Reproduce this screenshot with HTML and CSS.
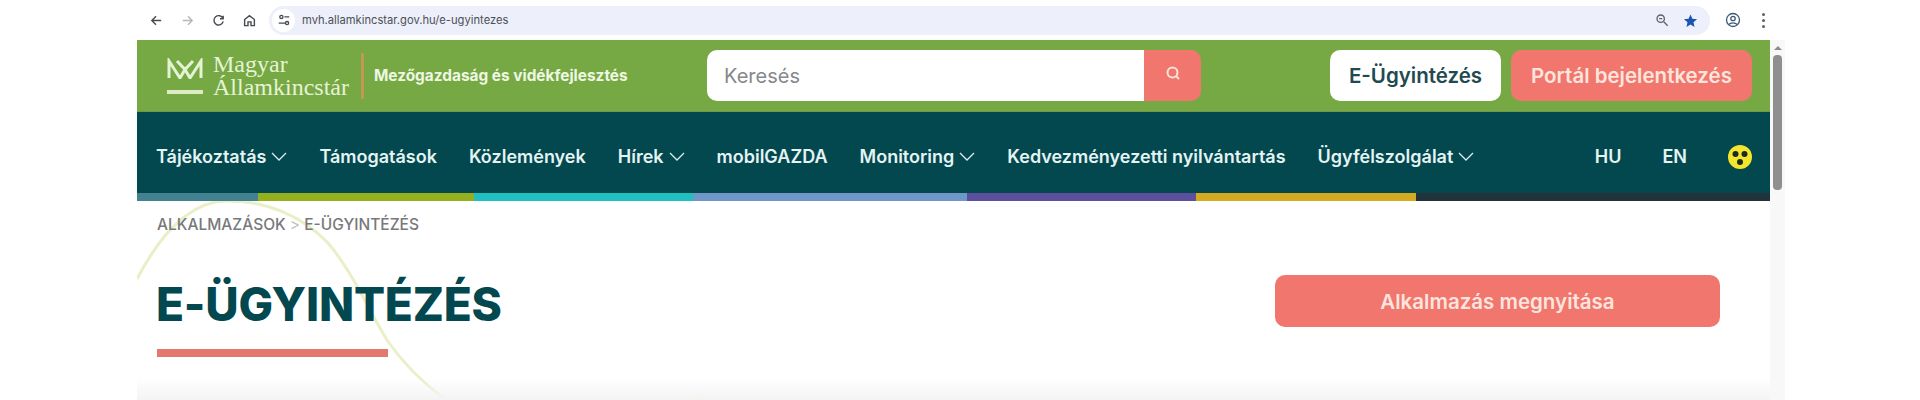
FILE: index.html
```html
<!DOCTYPE html>
<html lang="hu">
<head>
    <meta charset="UTF-8">
    <title>E-Ügyintézés</title>
    <link rel="stylesheet" href="styles.css">
</head>
<body>
    <div class="window">
        <!-- browser bar -->
        <div class="chrome">
            <svg class="chrome-icon" viewBox="0 0 16 16"><path d="M13 8H3.500M7.500 3.500 3 8l4.500 4.500"/></svg>
            <svg class="chrome-icon faded" viewBox="0 0 16 16"><path d="M3 8h9.500M8.500 3.500 13 8l-4.500 4.500"/></svg>
            <svg class="chrome-icon" viewBox="0 0 16 16"><path d="M12.800 6A5 5 0 1 0 13 9M13 2.800V6.200H9.600"/></svg>
            <svg class="chrome-icon" viewBox="0 0 16 16"><path d="M2.800 7 8 2.800 13.200 7v6.500H9.600V9.500H6.400v4H2.800z"/></svg>
            <div class="address">
                <span class="tune">
                    <svg viewBox="0 0 16 16"><circle cx="5" cy="4.500" r="1.800"/><path d="M8.500 4.500H14M2 11.500h7.500"/><circle cx="11.500" cy="11.500" r="1.800"/></svg>
                </span>
                <span class="url">mvh.allamkincstar.gov.hu/e-ugyintezes</span>
                <svg class="addr-zoom" viewBox="0 0 16 16"><circle cx="6.500" cy="6.500" r="4.200"/><path d="M10 10l4.500 4.500M4.800 6.500h3.400"/></svg>
                <svg class="addr-star" viewBox="0 0 16 16"><path d="M8 1.500l2 4.600 5 .5-3.800 3.300 1.100 4.900L8 12.300l-4.300 2.500 1.100-4.900L1 6.600l5-.5z"/></svg>
            </div>
            <svg class="profile" viewBox="0 0 16 16"><circle cx="8" cy="8" r="6.500"/><circle cx="8" cy="6.500" r="2.200"/><path d="M3.800 12.500c2-2.300 6.400-2.300 8.400 0"/></svg>
            <span class="dots"><i></i><i></i><i></i></span>
        </div>

        <div class="page">
            <div class="site">
                <svg class="curve" viewBox="0 0 1633 199">
                    <path d="M0 78C25 30 55-1 92 0c38 0 73 15 99 42 24 28 41 68 59 97 18 26 40 46 59 60"/>
                    <path d="M548 199q16-4 32 0"/>
                </svg>

                <header class="topbar">
                    <div class="brand">
                        <div class="brand-mark">
                            <svg viewBox="0 0 36 21"><path d="M2 20V3l11 17 5-8.500 5 8.500L34 3v17M10 3l8 8.500L26 3"/></svg>
                            <span class="brand-rule"></span>
                        </div>
                        <div class="brand-name">Magyar<br>Államkincstár</div>
                        <div class="brand-sub">Mezőgazdaság és vidékfejlesztés</div>
                    </div>
                    <div class="search">
                        <div class="search-input">Keresés</div>
                        <div class="search-btn">
                            <svg viewBox="0 0 16 16"><circle cx="7.500" cy="7.500" r="5"/><path d="M11 11l3 3"/></svg>
                        </div>
                    </div>
                    <div class="top-actions">
                        <a class="btn btn-white">E-Ügyintézés</a>
                        <a class="btn btn-red">Portál bejelentkezés</a>
                    </div>
                </header>

                <nav class="nav">
                    <a>Tájékoztatás <svg class="chev" viewBox="0 0 16 9"><path d="M1 1l7 7 7-7"/></svg></a>
                    <a>Támogatások</a>
                    <a>Közlemények</a>
                    <a>Hírek <svg class="chev" viewBox="0 0 16 9"><path d="M1 1l7 7 7-7"/></svg></a>
                    <a>mobilGAZDA</a>
                    <a>Monitoring <svg class="chev" viewBox="0 0 16 9"><path d="M1 1l7 7 7-7"/></svg></a>
                    <a>Kedvezményezetti nyilvántartás</a>
                    <a>Ügyfélszolgálat <svg class="chev" viewBox="0 0 16 9"><path d="M1 1l7 7 7-7"/></svg></a>
                    <div class="nav-right">
                        <a>HU</a>
                        <a>EN</a>
                        <svg class="blind" viewBox="0 0 24 24"><circle cx="12" cy="12" r="12" fill="#f3e62c"/><circle cx="7.500" cy="9" r="3" fill="#1d2a22"/><circle cx="16.500" cy="9" r="3" fill="#1d2a22"/><circle cx="12" cy="17" r="3" fill="#1d2a22"/></svg>
                    </div>
                </nav>

                <div class="stripes">
                    <span class="s1"></span><span class="s2"></span><span class="s3"></span><span class="s4"></span><span class="s5"></span><span class="s6"></span><span class="s7"></span>
                </div>

                <main class="content">
                    <div class="crumbs">ALKALMAZÁSOK <span class="crumb-sep">&gt;</span> E-ÜGYINTÉZÉS</div>
                    <div class="title-row">
                        <div>
                            <h1>E-ÜGYINTÉZÉS</h1>
                            <div class="title-bar"></div>
                        </div>
                        <a class="btn btn-red btn-open">Alkalmazás megnyitása</a>
                    </div>
                </main>
                <div class="fade"></div>
            </div>
            <div class="scrollbar">
                <span class="scroll-up"></span>
                <span class="scroll-thumb"></span>
            </div>
        </div>
    </div>
</body>
</html>
```

FILE: styles.css
```css
body {
    margin: 0;
    height: 400px;
    overflow: hidden;
    background: #fff;
    font-family: Inter, "Liberation Sans", sans-serif;
}
.window {
    width: 1648px;
    margin-left: 137px;
}

/* browser bar */
.chrome {
    height: 40px;
    display: flex;
    align-items: center;
    box-sizing: border-box;
    padding: 0 20px 0 12px;
    background: #fff;
}
.chrome-icon {
    width: 15px;
    height: 15px;
    margin-right: 16px;
    fill: none;
    stroke: #474b50;
    stroke-width: 1.500;
}
.chrome-icon.faded {
    stroke: #b4b7bb;
}
.address {
    flex: 1;
    height: 29px;
    margin-left: -4px;
    display: flex;
    align-items: center;
    border-radius: 15px;
    background: #edf0fa;
}
.tune {
    width: 23px;
    height: 23px;
    margin: 0 7px 0 3px;
    display: flex;
    align-items: center;
    justify-content: center;
    border-radius: 50%;
    background: #fff;
}
.tune svg {
    width: 14px;
    height: 14px;
    fill: none;
    stroke: #474b50;
    stroke-width: 1.500;
}
.url {
    flex: 1;
    font-size: 11.200px;
    color: #4b4f57;
}
.addr-zoom {
    width: 14px;
    height: 14px;
    margin-right: 14px;
    fill: none;
    stroke: #5d6165;
    stroke-width: 1.500;
}
.addr-star {
    width: 15px;
    height: 15px;
    margin-right: 12px;
    fill: #1a56b0;
}
.profile {
    width: 16px;
    height: 16px;
    margin-left: 15px;
    fill: none;
    stroke: #3c5a78;
    stroke-width: 1.300;
}
.dots {
    margin-left: 21px;
    display: flex;
    flex-direction: column;
    gap: 3px;
}
.dots i {
    width: 3px;
    height: 3px;
    border-radius: 50%;
    background: #5d6165;
}

.page {
    display: flex;
    height: 360px;
}
.site {
    position: relative;
    width: 1633px;
    overflow: hidden;
    background: #fff;
}
.scrollbar {
    flex: 1;
    background: #f8f8f8;
    display: flex;
    flex-direction: column;
    align-items: center;
}
.scroll-up {
    margin-top: 6px;
    border-left: 4px solid transparent;
    border-right: 4px solid transparent;
    border-bottom: 4px solid #8c8c8c;
}
.scroll-thumb {
    width: 9px;
    height: 135px;
    margin-top: 5px;
    border-radius: 4px;
    background: #8f8f8f;
}

/* green bar */
.topbar {
    height: 72px;
    display: flex;
    align-items: center;
    box-sizing: border-box;
    padding-left: 30px;
    background: #76a844;
    border-bottom: 1px solid #6d9a48;
}
.brand {
    width: 540px;
    display: flex;
    align-items: center;
}
.brand-mark {
    width: 36px;
    display: flex;
    flex-direction: column;
    gap: 11px;
}
.brand-mark svg {
    width: 36px;
    height: 21px;
    fill: none;
    stroke: #e4f3d2;
    stroke-width: 3;
}
.brand-rule {
    height: 4px;
    background: #dcebc4;
}
.brand-name {
    margin-left: 10px;
    padding-right: 12px;
    border-right: 3px solid #c09a50;
    font-family: "Liberation Serif", serif;
    font-size: 24px;
    line-height: 23px;
    color: #e6f3d6;
}
.brand-sub {
    margin-left: 10px;
    font-size: 15.400px;
    font-weight: 700;
    white-space: nowrap;
    color: #eef7e2;
}
.search {
    width: 494px;
    height: 51px;
    display: flex;
}
.search-input {
    flex: 1;
    display: flex;
    align-items: center;
    box-sizing: border-box;
    padding-left: 17px;
    border-radius: 10px 0 0 10px;
    background: #fff;
    font-size: 20px;
    color: #85888c;
}
.search-btn {
    width: 57px;
    display: flex;
    align-items: center;
    justify-content: center;
    padding-bottom: 6px;
    box-sizing: border-box;
    border-radius: 0 10px 10px 0;
    background: #f1766d;
}
.search-btn svg {
    width: 16px;
    height: 16px;
    fill: none;
    stroke: #fbe3da;
    stroke-width: 2;
}
.top-actions {
    margin-left: 129px;
    display: flex;
    gap: 10px;
}
.btn {
    height: 51px;
    display: flex;
    align-items: center;
    justify-content: center;
    border-radius: 10px;
    font-size: 20.500px;
    font-weight: 600;
}
.btn-white {
    width: 171px;
    background: #fff;
    color: #1f4a50;
}
.btn-red {
    width: 241px;
    background: #f1766d;
    color: #fde5dd;
}

/* dark nav */
.nav {
    height: 81px;
    display: flex;
    align-items: center;
    gap: 32px;
    box-sizing: border-box;
    padding: 8px 18px 0 19px;
    background: #03474f;
    font-size: 18px;
    font-weight: 600;
    white-space: nowrap;
    color: #e3f4f2;
}
.nav a {
    display: flex;
    align-items: center;
    gap: 5px;
}
.chev {
    width: 16px;
    height: 9px;
    fill: none;
    stroke: #d8eeee;
    stroke-width: 1.300;
}
.nav-right {
    margin-left: auto;
    display: flex;
    align-items: center;
    gap: 41px;
}
.blind {
    width: 24px;
    height: 24px;
}
.stripes {
    height: 8px;
    display: flex;
}
.stripes span {
    display: block;
}
.s1 { width: 121px; background: #42818f; }
.s2 { width: 216px; background: #95b01f; }
.s3 { width: 219px; background: #22bfc0; }
.s4 { width: 274px; background: #6f97c8; }
.s5 { width: 229px; background: #5b4f9e; }
.s6 { width: 220px; background: #d4aa20; }
.s7 { flex: 1; background: #20323a; }

.content {
    position: relative;
    padding: 14px 50px 0 20px;
}
.crumbs {
    font-size: 15.500px;
    font-weight: 500;
    color: #77797b;
}
.crumb-sep {
    color: #c0c0c0;
    font-weight: 400;
}
.title-row {
    display: flex;
    justify-content: space-between;
    align-items: flex-start;
    margin-top: 41px;
}
h1 {
    margin: 1px 0 0 -1px;
    font-size: 46px;
    line-height: 56px;
    font-weight: 800;
    letter-spacing: -0.200px;
    color: #03474f;
}
.title-bar {
    width: 231px;
    height: 8px;
    margin-top: 17px;
    background: #e3786f;
}
.btn-open {
    width: 445px;
    height: 52px;
}
.curve {
    position: absolute;
    top: 161px;
    left: 0;
    width: 1633px;
    height: 199px;
    fill: none;
    stroke: #e9efc6;
    stroke-width: 3;
}
.fade {
    position: absolute;
    left: 0;
    right: 0;
    bottom: 0;
    height: 22px;
    background: linear-gradient(rgba(244,244,244,0), #f4f4f4);
}
```
